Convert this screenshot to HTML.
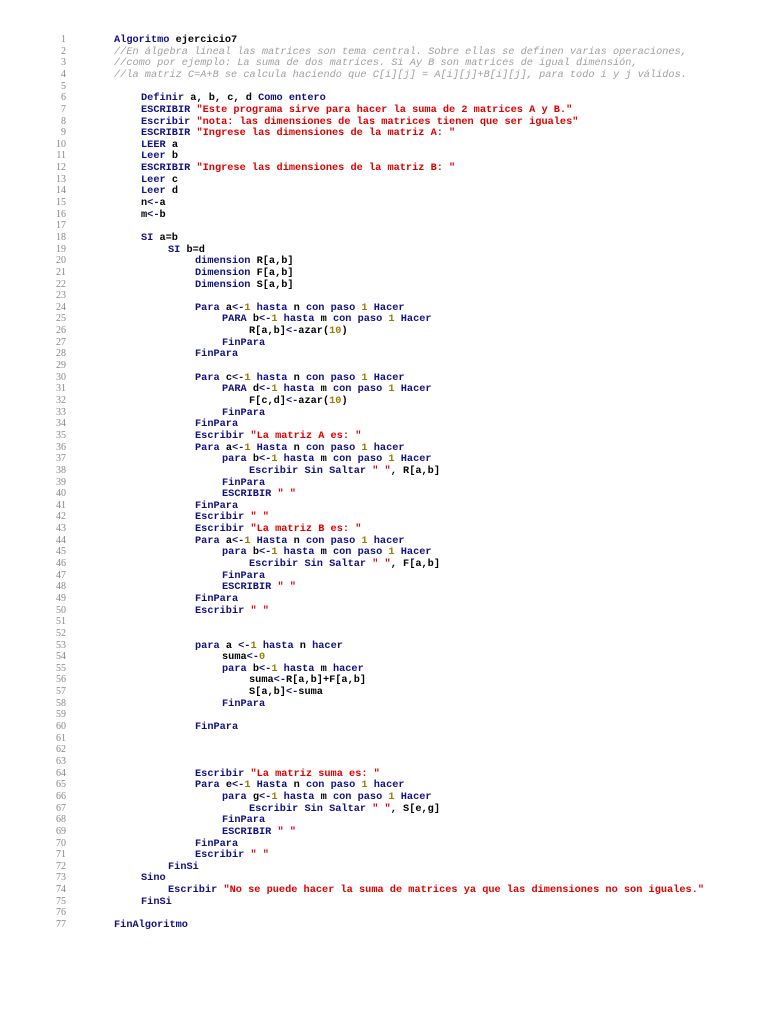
<!DOCTYPE html>
<html><head><meta charset="utf-8"><style>
body{margin:0;background:#fff;width:768px;height:1024px;overflow:hidden;position:relative}
.l{position:absolute;height:12px;line-height:12px;font-family:"Liberation Mono",monospace;font-size:10.27px;white-space:pre;color:#000;font-weight:bold}
.ln{position:absolute;width:66px;left:0;text-align:right;font-family:"Liberation Serif",serif;font-size:10px;color:#888;line-height:12px;height:12px}
.k{color:#101080}.s{color:#e00000}.n{color:#a07800}.c{color:#a0a0a0;font-style:italic;font-weight:normal}
</style></head><body>
<div id="w"></div>
<script>
var L=[
[0,'<span class="k">Algoritmo</span> ejercicio7'],
[0,'<span class="c">//En álgebra lineal las matrices son tema central. Sobre ellas se definen varias operaciones,</span>'],
[0,'<span class="c">//como por ejemplo: La suma de dos matrices. Si Ay B son matrices de igual dimensión,</span>'],
[0,'<span class="c">//la matriz C=A+B se calcula haciendo que C[i][j] = A[i][j]+B[i][j], para todo i y j válidos.</span>'],
[0,''],
[1,'<span class="k">Definir</span> a, b, c, d <span class="k">Como entero</span>'],
[1,'<span class="k">ESCRIBIR</span> <span class="s">"Este programa sirve para hacer la suma de 2 matrices A y B."</span>'],
[1,'<span class="k">Escribir</span> <span class="s">"nota: las dimensiones de las matrices tienen que ser iguales"</span>'],
[1,'<span class="k">ESCRIBIR</span> <span class="s">"Ingrese las dimensiones de la matriz A: "</span>'],
[1,'<span class="k">LEER</span> a'],
[1,'<span class="k">Leer</span> b'],
[1,'<span class="k">ESCRIBIR</span> <span class="s">"Ingrese las dimensiones de la matriz B: "</span>'],
[1,'<span class="k">Leer</span> c'],
[1,'<span class="k">Leer</span> d'],
[1,'n<span class="k">&lt;-</span>a'],
[1,'m<span class="k">&lt;-</span>b'],
[0,''],
[1,'<span class="k">SI</span> a=b'],
[2,'<span class="k">SI</span> b=d'],
[3,'<span class="k">dimension</span> R[a,b]'],
[3,'<span class="k">Dimension</span> F[a,b]'],
[3,'<span class="k">Dimension</span> S[a,b]'],
[0,''],
[3,'<span class="k">Para</span> a<span class="k">&lt;-</span><span class="n">1</span> <span class="k">hasta</span> n <span class="k">con paso</span> <span class="n">1</span> <span class="k">Hacer</span>'],
[4,'<span class="k">PARA</span> b<span class="k">&lt;-</span><span class="n">1</span> <span class="k">hasta</span> m <span class="k">con paso</span> <span class="n">1</span> <span class="k">Hacer</span>'],
[5,'R[a,b]<span class="k">&lt;-</span>azar(<span class="n">10</span>)'],
[4,'<span class="k">FinPara</span>'],
[3,'<span class="k">FinPara</span>'],
[0,''],
[3,'<span class="k">Para</span> c<span class="k">&lt;-</span><span class="n">1</span> <span class="k">hasta</span> n <span class="k">con paso</span> <span class="n">1</span> <span class="k">Hacer</span>'],
[4,'<span class="k">PARA</span> d<span class="k">&lt;-</span><span class="n">1</span> <span class="k">hasta</span> m <span class="k">con paso</span> <span class="n">1</span> <span class="k">Hacer</span>'],
[5,'F[c,d]<span class="k">&lt;-</span>azar(<span class="n">10</span>)'],
[4,'<span class="k">FinPara</span>'],
[3,'<span class="k">FinPara</span>'],
[3,'<span class="k">Escribir</span> <span class="s">"La matriz A es: "</span>'],
[3,'<span class="k">Para</span> a<span class="k">&lt;-</span><span class="n">1</span> <span class="k">Hasta</span> n <span class="k">con paso</span> <span class="n">1</span> <span class="k">hacer</span>'],
[4,'<span class="k">para</span> b<span class="k">&lt;-</span><span class="n">1</span> <span class="k">hasta</span> m <span class="k">con paso</span> <span class="n">1</span> <span class="k">Hacer</span>'],
[5,'<span class="k">Escribir Sin Saltar</span> <span class="s">" "</span>, R[a,b]'],
[4,'<span class="k">FinPara</span>'],
[4,'<span class="k">ESCRIBIR</span> <span class="s">" "</span>'],
[3,'<span class="k">FinPara</span>'],
[3,'<span class="k">Escribir</span> <span class="s">" "</span>'],
[3,'<span class="k">Escribir</span> <span class="s">"La matriz B es: "</span>'],
[3,'<span class="k">Para</span> a<span class="k">&lt;-</span><span class="n">1</span> <span class="k">Hasta</span> n <span class="k">con paso</span> <span class="n">1</span> <span class="k">hacer</span>'],
[4,'<span class="k">para</span> b<span class="k">&lt;-</span><span class="n">1</span> <span class="k">hasta</span> m <span class="k">con paso</span> <span class="n">1</span> <span class="k">Hacer</span>'],
[5,'<span class="k">Escribir Sin Saltar</span> <span class="s">" "</span>, F[a,b]'],
[4,'<span class="k">FinPara</span>'],
[4,'<span class="k">ESCRIBIR</span> <span class="s">" "</span>'],
[3,'<span class="k">FinPara</span>'],
[3,'<span class="k">Escribir</span> <span class="s">" "</span>'],
[0,''],[0,''],
[3,'<span class="k">para</span> a <span class="k">&lt;-</span><span class="n">1</span> <span class="k">hasta</span> n <span class="k">hacer</span>'],
[4,'suma<span class="k">&lt;-</span><span class="n">0</span>'],
[4,'<span class="k">para</span> b<span class="k">&lt;-</span><span class="n">1</span> <span class="k">hasta</span> m <span class="k">hacer</span>'],
[5,'suma<span class="k">&lt;-</span>R[a,b]+F[a,b]'],
[5,'S[a,b]<span class="k">&lt;-</span>suma'],
[4,'<span class="k">FinPara</span>'],
[0,''],
[3,'<span class="k">FinPara</span>'],
[0,''],[0,''],[0,''],
[3,'<span class="k">Escribir</span> <span class="s">"La matriz suma es: "</span>'],
[3,'<span class="k">Para</span> e<span class="k">&lt;-</span><span class="n">1</span> <span class="k">Hasta</span> n <span class="k">con paso</span> <span class="n">1</span> <span class="k">hacer</span>'],
[4,'<span class="k">para</span> g<span class="k">&lt;-</span><span class="n">1</span> <span class="k">hasta</span> m <span class="k">con paso</span> <span class="n">1</span> <span class="k">Hacer</span>'],
[5,'<span class="k">Escribir Sin Saltar</span> <span class="s">" "</span>, S[e,g]'],
[4,'<span class="k">FinPara</span>'],
[4,'<span class="k">ESCRIBIR</span> <span class="s">" "</span>'],
[3,'<span class="k">FinPara</span>'],
[3,'<span class="k">Escribir</span> <span class="s">" "</span>'],
[2,'<span class="k">FinSi</span>'],
[1,'<span class="k">Sino</span>'],
[2,'<span class="k">Escribir</span> <span class="s">"No se puede hacer la suma de matrices ya que las dimensiones no son iguales."</span>'],
[1,'<span class="k">FinSi</span>'],
[0,''],
[0,'<span class="k">FinAlgoritmo</span>']
];
var h='';
for(var i=0;i<L.length;i++){
 var t=(34+i*11.645).toFixed(2);
 h+='<div class="ln" style="top:'+t+'px">'+(i+1)+'</div>';
 h+='<div class="l" style="top:'+t+'px;left:'+(114+L[i][0]*27)+'px">'+L[i][1]+'</div>';
}
document.getElementById('w').innerHTML=h;
</script>
</body></html>
